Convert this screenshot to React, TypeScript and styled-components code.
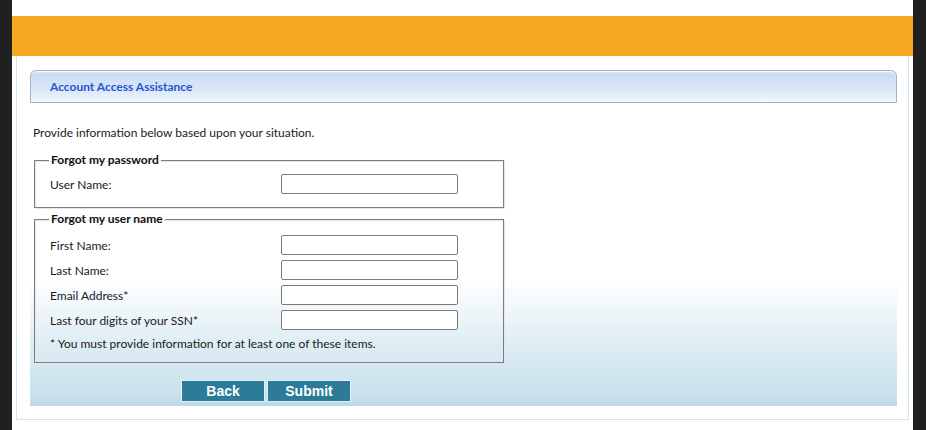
import React from "react";
import styled, { createGlobalStyle } from "styled-components";

const Global = createGlobalStyle`
  html, body { margin: 0; padding: 0; background: #202020; }
  body { font-family: Lato, "Liberation Sans", sans-serif; }
`;

const Page = styled.div`
  margin: 0 13px 0 12px;
  padding-top: 16px;
  width: 901px;
  height: 414px;
  background: #ffffff;
  display: flex;
  flex-direction: column;
`;

const Banner = styled.div`
  height: 40px;
  background: #f4a823;
`;

const Frame = styled.div`
  margin: 0 4px;
  border: 1px solid #d6e3ea;
  border-top: none;
  padding: 14px 11px 13px 13px;
`;

const Panel = styled.div`
  display: flex;
  flex-direction: column;
`;

const PanelHeader = styled.div`
  height: 31px;
  border: 1px solid #9fb5ca;
  border-radius: 6px 6px 0 0;
  background: linear-gradient(#e4eefb 0px, #cadcf4 3px, #dbe8f8 20px, #f4f8fd 100%);
  box-shadow: inset 0 1px 0 #f6f9fe;
  display: flex;
  align-items: center;
  padding-left: 19px;
  font-size: 12px;
  font-weight: 700;
  color: #1f56d4;
`;

const PanelBody = styled.div`
  padding: 22px 3px 3px 3px;
  background: linear-gradient(#ffffff 0px, #ffffff 175px, #e6f1f7 225px, #c7e1ec 292px, #bcd8e5 304px);
  display: flex;
  flex-direction: column;
`;

const Intro = styled.p`
  margin: 0 0 13px 0;
  font-size: 12px;
  line-height: 15px;
  color: #1a1a1a;
`;

const Fieldset = styled.fieldset<{ $gap: number; $top: number; $bottom: number }>`
  margin: 0 0 ${(p) => p.$gap}px 1px;
  width: 470px;
  box-sizing: border-box;
  border: 1px solid #7d7d7d;
  box-shadow: inset 1px 1px 0 #e6e6e6, 1px 1px 0 #e6e6e6;
  padding: ${(p) => p.$top}px 14px ${(p) => p.$bottom}px 15px;
`;

const Legend = styled.legend`
  padding: 0 2px;
  margin-left: -1px;
  font-size: 12px;
  line-height: 14px;
  font-weight: 700;
  color: #111;
`;

const Rows = styled.div`
  display: grid;
  grid-template-columns: 231px 177px;
  row-gap: 5px;
  align-items: center;
`;

const Label = styled.label`
  font-size: 12px;
  color: #1a1a1a;
`;

const Input = styled.input`
  box-sizing: border-box;
  width: 177px;
  height: 20px;
  margin: 0;
  border: 1px solid #7a7a7a;
  border-radius: 2px;
  background: #fff;
`;

const Note = styled.div`
  margin-top: 6px;
  font-size: 12px;
  color: #1a1a1a;
`;

const Buttons = styled.div`
  display: flex;
  gap: 2px;
  margin-left: 148px;
  padding-bottom: 1px;
`;

const Button = styled.button`
  box-sizing: border-box;
  width: 84px;
  height: 22px;
  border: 1px solid #e4f0f6;
  background: #2b7b99;
  color: #fff;
  font-family: "Liberation Sans", Arial, sans-serif;
  font-weight: 700;
  font-size: 14px;
  padding: 0;
`;

export default function App() {
  return (
    <>
      <Global />
      <Page>
        <Banner />
        <Frame>
          <Panel>
            <PanelHeader>Account Access Assistance</PanelHeader>
            <PanelBody>
              <Intro>Provide information below based upon your situation.</Intro>
              <Fieldset $gap={4} $top={7} $bottom={13}>
                <Legend>Forgot my password</Legend>
                <Rows>
                  <Label>User Name:</Label>
                  <Input type="text" />
                </Rows>
              </Fieldset>
              <Fieldset $gap={17} $top={9} $bottom={11}>
                <Legend>Forgot my user name</Legend>
                <Rows>
                  <Label>First Name:</Label>
                  <Input type="text" />
                  <Label>Last Name:</Label>
                  <Input type="text" />
                  <Label>Email Address*</Label>
                  <Input type="text" />
                  <Label>Last four digits of your SSN*</Label>
                  <Input type="text" />
                </Rows>
                <Note>* You must provide information for at least one of these items.</Note>
              </Fieldset>
              <Buttons>
                <Button>Back</Button>
                <Button>Submit</Button>
              </Buttons>
            </PanelBody>
          </Panel>
        </Frame>
      </Page>
    </>
  );
}
